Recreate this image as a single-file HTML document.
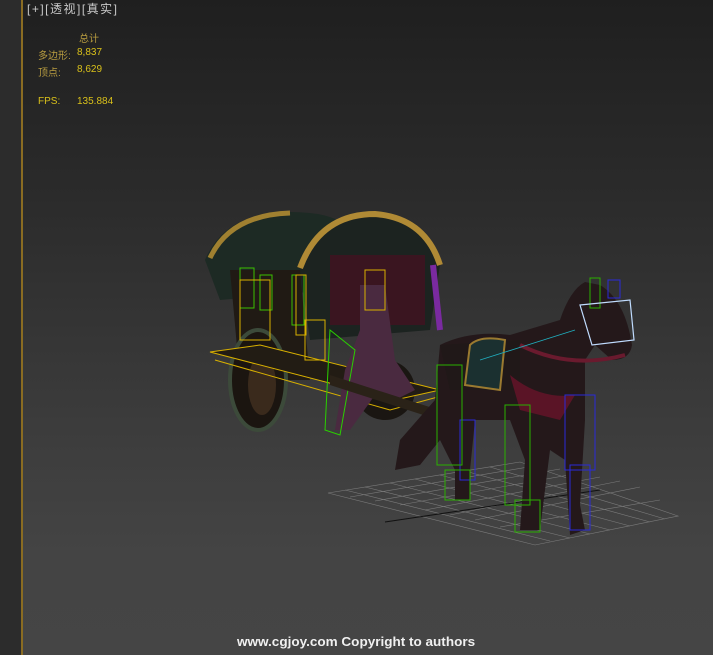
<!DOCTYPE html>
<html><head><meta charset="utf-8"><style>
html,body{margin:0;padding:0;width:713px;height:655px;overflow:hidden;background:#3a3a3a}
.vp{position:absolute;left:0;top:0;width:713px;height:655px;background:linear-gradient(#1f1f1f 0%,#2b2b2b 30%,#3c3c3c 65%,#444 85%,#454545 100%)}
.strip{position:absolute;left:0;top:0;width:21px;height:655px;background:#2c2c2c}
.line{position:absolute;left:21px;top:0;width:2px;height:655px;background:#8a6c22}
.t{position:absolute;font-family:"Liberation Sans","Noto Sans CJK SC",sans-serif;font-size:10px;white-space:nowrap}
.hd{left:27px;top:0px;color:#c8c8c8;font-size:12px;letter-spacing:1.5px}
.y{color:#d9c01a}.o{color:#b89c40}
.cp{left:237px;top:634px;color:#f0f0f0;font-weight:bold;font-size:13px;transform:scaleX(1.04);transform-origin:left top}
</style></head><body>
<div class="vp"></div>
<svg style="position:absolute;left:0;top:0" width="713" height="655">
<g stroke="#8a8a8a" stroke-width="0.6" fill="none" opacity="0.8">
<polygon points="328,493 520,462 678,516 535,545"/>
<line x1="350" y1="497" x2="540" y2="465"/><line x1="375" y1="501" x2="560" y2="469"/><line x1="400" y1="505" x2="580" y2="473"/><line x1="425" y1="510" x2="600" y2="477"/><line x1="450" y1="515" x2="620" y2="481"/><line x1="475" y1="520" x2="640" y2="487"/><line x1="500" y1="527" x2="660" y2="500"/>
<line x1="345" y1="490" x2="550" y2="541"/><line x1="365" y1="487" x2="570" y2="538"/><line x1="390" y1="483" x2="590" y2="534"/><line x1="415" y1="479" x2="610" y2="530"/><line x1="440" y1="475" x2="630" y2="526"/><line x1="465" y1="471" x2="650" y2="522"/><line x1="490" y1="467" x2="665" y2="519"/>
</g>
<line x1="385" y1="522" x2="600" y2="490" stroke="#111" stroke-width="1"/>
<path d="M205,260 Q225,212 290,212 Q330,212 345,225 L330,290 L220,300 Z" fill="#1d2a24"/>
<path d="M210,258 Q230,215 290,213" stroke="#a08030" stroke-width="5" fill="none"/>
<path d="M300,270 Q320,212 375,214 Q425,218 440,265 L430,330 L310,340 Z" fill="#1c2320"/>
<path d="M300,268 Q320,214 375,214 Q425,218 440,265" stroke="#b08a35" stroke-width="6" fill="none"/>
<rect x="330" y="255" width="95" height="70" fill="#3a1520"/>
<path d="M230,270 L300,270 L310,380 L240,380Z" fill="#201a14"/>
<ellipse cx="258" cy="380" rx="28" ry="50" fill="#1b1510" stroke="#3c4a3a" stroke-width="4"/>
<ellipse cx="262" cy="385" rx="14" ry="30" fill="#3a2a1c"/>
<ellipse cx="385" cy="390" rx="30" ry="30" fill="#1a1612"/>
<path d="M210,352 L395,400 L440,390 L260,345Z" fill="#221c14" stroke="#d8b000" stroke-width="1"/>
<path d="M215,360 L390,410 L445,395" stroke="#d8b000" fill="none" stroke-width="1"/>
<path d="M360,285 L385,285 L395,360 L415,390 L395,400 L375,395 L350,430 L335,430 L345,370 L360,330Z" fill="#4a2a40"/>
<rect x="365" y="270" width="20" height="40" fill="none" stroke="#d8b000"/>
<path d="M330,330 L355,350 L340,435 L325,430Z" fill="none" stroke="#2ad000"/>
<g stroke="#3cc000" fill="none" stroke-width="1">
<rect x="240" y="268" width="14" height="40"/><rect x="260" y="275" width="12" height="35"/><rect x="292" y="275" width="12" height="50"/>
</g>
<g stroke="#d8b000" fill="none" stroke-width="1">
<rect x="296" y="275" width="10" height="60"/><rect x="305" y="320" width="20" height="40"/><rect x="240" y="280" width="30" height="60"/>
</g>
<path d="M433,265 L440,330" stroke="#7a2aa0" stroke-width="6"/>
<path d="M330,375 L470,420 L470,430 L330,385Z" fill="#2a2218"/>
<path d="M440,345 Q470,330 510,335 L560,320 Q570,290 585,282 L600,285 Q625,300 632,345 Q630,360 612,360 L595,345 L585,360 L585,420 L580,505 L585,530 L570,535 L565,460 L550,450 L540,530 L520,530 L525,460 L510,420 L475,420 L470,470 L470,500 L455,500 L455,470 L440,440 L420,465 L395,470 L400,440 L435,400Z" fill="#24181a"/>
<path d="M440,345 L520,340 L520,390 L450,390Z" fill="#201818"/>
<path d="M470,345 Q480,335 505,340 L500,390 L465,385Z" fill="#1b3030" stroke="#9a7a30" stroke-width="2"/>
<path d="M510,375 Q540,400 575,395 L560,420 L520,410Z" fill="#5a1426"/>
<path d="M520,345 Q570,370 625,355" stroke="#6a1a2e" stroke-width="4" fill="none"/>
<g stroke="#2a2ad8" fill="none" stroke-width="1">
<rect x="565" y="395" width="30" height="75"/><rect x="570" y="465" width="20" height="65"/><rect x="460" y="420" width="15" height="60"/><rect x="608" y="280" width="12" height="18"/>
</g>
<g stroke="#2ab000" fill="none" stroke-width="1">
<rect x="505" y="405" width="25" height="100"/><rect x="515" y="500" width="25" height="32"/><rect x="437" y="365" width="25" height="100"/><rect x="445" y="470" width="25" height="30"/><rect x="590" y="278" width="10" height="30"/>
</g>
<path d="M580,305 L630,300 L634,340 L592,345Z" fill="none" stroke="#c0dcff" stroke-width="1.2"/>
<path d="M480,360 L575,330" stroke="#20b0c0" stroke-width="0.8"/>
</svg>
<div class="strip"></div><div class="line"></div>
<div class="t hd">[+][透视][真实]</div>
<div class="t o" style="left:79px;top:30px">总计</div>
<div class="t o" style="left:38px;top:47px">多边形:</div><div class="t y" style="left:77px;top:47px">8,837</div>
<div class="t o" style="left:38px;top:64px">顶点:</div><div class="t y" style="left:77px;top:64px">8,629</div>
<div class="t y" style="left:38px;top:96px">FPS:</div><div class="t y" style="left:77px;top:96px">135.884</div>
<div class="t cp">www.cgjoy.com Copyright to authors</div>
</body></html>
